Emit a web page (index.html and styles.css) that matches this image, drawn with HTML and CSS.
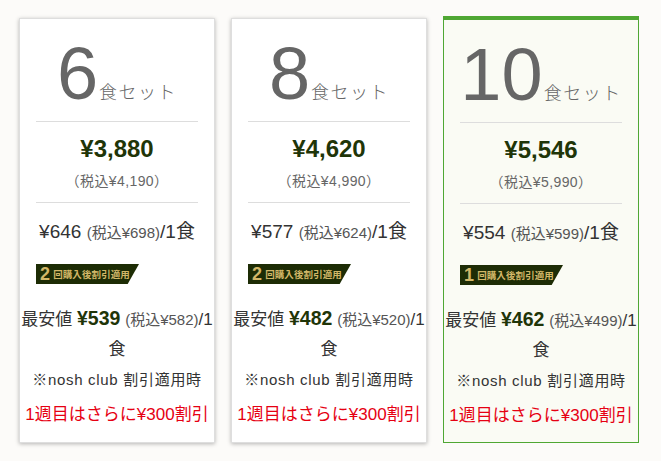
FILE: index.html
```html
<!DOCTYPE html>
<html lang="ja">
<head>
  <meta charset="UTF-8">
  <meta name="viewport" content="width=device-width, initial-scale=1.0">
  <title>nosh セット料金</title>
  <link rel="stylesheet" href="styles.css">
</head>
<body>
  <div class="plans">
    <div class="plan">
      <div class="plan-head">
        <span class="plan-num">6</span><span class="plan-unit">食セット</span>
      </div>
      <div class="plan-price">
        <p class="price">¥3,880</p>
        <p class="price-tax">（税込¥4,190）</p>
      </div>
      <p class="per-meal">¥646 <small>(税込¥698)</small>/1食</p>
      <div class="badge"><b>2</b>回購入後割引適用</div>
      <p class="lowest">最安値 <strong>¥539</strong> <small>(税込¥582)</small>/1食</p>
      <p class="note">※nosh club 割引適用時</p>
      <p class="first-week">1週目はさらに¥300割引</p>
    </div>

    <div class="plan">
      <div class="plan-head">
        <span class="plan-num">8</span><span class="plan-unit">食セット</span>
      </div>
      <div class="plan-price">
        <p class="price">¥4,620</p>
        <p class="price-tax">（税込¥4,990）</p>
      </div>
      <p class="per-meal">¥577 <small>(税込¥624)</small>/1食</p>
      <div class="badge"><b>2</b>回購入後割引適用</div>
      <p class="lowest">最安値 <strong>¥482</strong> <small>(税込¥520)</small>/1食</p>
      <p class="note">※nosh club 割引適用時</p>
      <p class="first-week">1週目はさらに¥300割引</p>
    </div>

    <div class="plan plan-best">
      <div class="plan-head">
        <span class="plan-num">10</span><span class="plan-unit">食セット</span>
      </div>
      <div class="plan-price">
        <p class="price">¥5,546</p>
        <p class="price-tax">（税込¥5,990）</p>
      </div>
      <p class="per-meal">¥554 <small>(税込¥599)</small>/1食</p>
      <div class="badge"><b>1</b>回購入後割引適用</div>
      <p class="lowest">最安値 <strong>¥462</strong> <small>(税込¥499)</small>/1食</p>
      <p class="note">※nosh club 割引適用時</p>
      <p class="first-week">1週目はさらに¥300割引</p>
    </div>
  </div>
</body>
</html>
```

FILE: styles.css
```css
:root {
  --bg-color: #fcfbf9;
  --card-bg: #ffffff;
  --best-bg: #fafbf4;
  --best-border: #4fa734;
  --line-color: #dddddd;
  --price-color: #1f3508;
  --text-color: #333333;
  --muted-text: #666666;
  --badge-bg: #1d2c05;
  --badge-text: #d2b768;
  --red: #e60012;
}

* {
  margin: 0;
  padding: 0;
  box-sizing: border-box;
}

body {
  width: 661px;
  height: 461px;
  font-family: 'Liberation Sans', 'Noto Sans CJK JP', sans-serif;
  background-color: var(--bg-color);
  color: var(--text-color);
  overflow: hidden;
}

.plans {
  display: grid;
  grid-template-columns: repeat(3, 196px);
  gap: 16px;
  padding: 18px 0 0 19px;
}

.plan {
  height: 425px;
  background-color: var(--card-bg);
  border: 1px solid #dedede;
  box-shadow: 0 1px 4px rgba(0, 0, 0, 0.28);
  text-align: center;
}

.plan-best {
  height: 427px;
  margin-top: -2px;
  background-color: var(--best-bg);
  border: 1px solid var(--best-border);
  border-top: 4px solid var(--best-border);
  box-shadow: none;
}

.plan-head {
  display: flex;
  justify-content: center;
  align-items: baseline;
  margin: 0 16px;
  padding: 18px 0 10px;
  border-bottom: 1px solid var(--line-color);
  color: var(--muted-text);
}

.plan-num {
  font-size: 74px;
  line-height: 1;
}

.plan-unit {
  font-size: 18px;
  line-height: 1;
  letter-spacing: 1.5px;
  margin-left: 1px;
  font-weight: 300;
}

.plan-price {
  margin: 0 16px;
  padding: 12px 0 11px;
  border-bottom: 1px solid var(--line-color);
}

.price {
  font-size: 24px;
  font-weight: 700;
  line-height: 30px;
  color: var(--price-color);
}

.price-tax {
  margin-top: 7px;
  font-size: 14px;
  line-height: 20px;
  letter-spacing: 0.4px;
  color: var(--muted-text);
}

.per-meal {
  padding-top: 18px;
  font-size: 19px;
  line-height: 22px;
}

small {
  font-size: 15px;
  color: #555555;
}

/* バッジ */
.badge {
  display: flex;
  align-items: center;
  width: 103px;
  height: 20px;
  margin: 20px 0 0 16px;
  padding-left: 4px;
  background-color: var(--badge-bg);
  color: var(--badge-text);
  font-size: 9.5px;
  font-weight: 700;
  letter-spacing: 0.1px;
  clip-path: polygon(0 0, 100% 0, 89% 100%, 0 100%);
}

.badge b {
  font-size: 18px;
  margin-right: 3px;
}

.lowest {
  margin-top: 19px;
  font-size: 17px;
  line-height: 30px;
}

.lowest strong {
  font-size: 19.5px;
  color: var(--price-color);
}

.note {
  margin-top: 3px;
  font-size: 15px;
  line-height: 24px;
  letter-spacing: 0.7px;
}

.first-week {
  margin-top: 10px;
  font-size: 17px;
  line-height: 26px;
  color: var(--red);
}
```
